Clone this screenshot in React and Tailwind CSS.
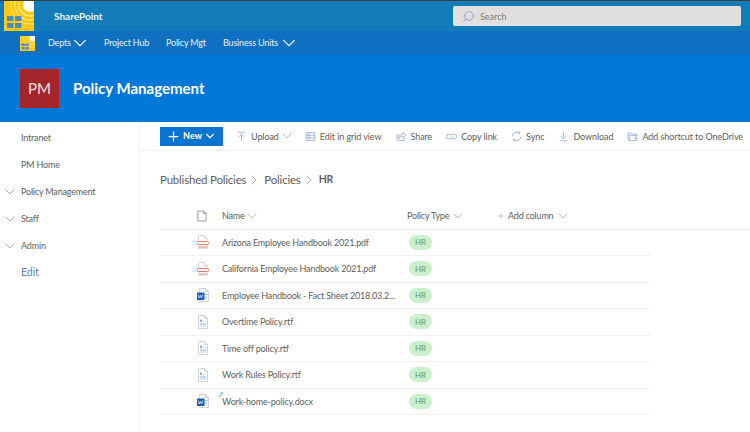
import { ChevronDown, ChevronRight, Plus, Search } from "lucide-react";

const font = { fontFamily: 'Lato, "Open Sans", sans-serif' };

const LogoIcon = ({ className }) => (
    <svg viewBox="0 0 30 30" className={className}>
        <rect width="30" height="30" fill="#fdc911" />
        <circle cx="26" cy="4" r="19" fill="none" stroke="#ffe27a" strokeWidth="1.2" />
        <circle cx="26" cy="4" r="15" fill="none" stroke="#ffe98a" strokeWidth="1.2" />
        <circle cx="26" cy="4" r="11" fill="none" stroke="#fff0b0" strokeWidth="1.2" />
        <circle cx="26" cy="4" r="7" fill="#ffffff" />
        <rect x="3" y="15" width="6.500" height="5" fill="#4f8db8" />
        <rect x="11" y="15" width="6.500" height="5" fill="#4f8db8" />
        <rect x="3" y="22" width="6.500" height="5" fill="#4f8db8" />
        <rect x="11" y="22" width="6.500" height="5" fill="#4f8db8" />
    </svg>
);

const PdfIcon = () => (
    <svg viewBox="0 0 14 14" className="w-[14px] h-[14px]">
        <path d="M2.500 13.500V.5h6l3 3v10z" fill="#fff" stroke="#d2d0ce" strokeWidth="0.8" />
        <path d="M8.500.5v3h3" fill="none" stroke="#d2d0ce" strokeWidth="0.8" />
        <rect x="1.500" y="6.500" width="11" height="3" rx="1" fill="#fff" stroke="#e0705f" strokeWidth="0.9" />
        <rect x="3" y="11" width="8" height="2" fill="#f2c0b8" />
    </svg>
);

const WordIcon = () => (
    <svg viewBox="0 0 14 14" className="w-[14px] h-[14px]">
        <path d="M3.500 13.500V.5h6l3 3v10z" fill="#fff" stroke="#c8c6c4" strokeWidth="0.8" />
        <path d="M9.500.5v3h3" fill="none" stroke="#c8c6c4" strokeWidth="0.8" />
        <rect x="9" y="6" width="2.500" height="1" fill="#8ab8e6" />
        <rect x="9" y="8.500" width="2.500" height="1" fill="#8ab8e6" />
        <rect x="1" y="4.500" width="7.500" height="7.500" fill="#1b5eb8" />
        <path d="M2.500 6.500l.8 3.500 1.200-2.500 1.200 2.500.8-3.500" fill="none" stroke="#fff" strokeWidth="0.7" />
    </svg>
);

const RtfIcon = () => (
    <svg viewBox="0 0 14 14" className="w-[14px] h-[14px]">
        <path d="M2.500 13.500V.5h6l3 3v10z" fill="#fff" stroke="#c8c6c4" strokeWidth="0.8" />
        <path d="M8.500.5v3h3" fill="none" stroke="#c8c6c4" strokeWidth="0.8" />
        <rect x="4" y="4.500" width="2" height="2.500" fill="#7fb2e0" />
        <rect x="4" y="8.500" width="6" height="1" fill="#7fb2e0" />
        <rect x="4" y="10.500" width="6" height="1" fill="#b5d3ee" />
        <rect x="7" y="5.500" width="3" height="1" fill="#b5d3ee" />
    </svg>
);

const ToolIcon = ({ children }) => (
    <svg
        viewBox="0 0 14 14"
        fill="none"
        stroke="#7f9fd0"
        strokeWidth="0.9"
        className="w-[11px] h-[11px] shrink-0"
    >
        {children}
    </svg>
);

const toolbar = [
    {
        label: "Upload",
        menu: true,
        icon: <path d="M2 1.500h10M7 13V4M3.500 7.500 7 4l3.500 3.500" />,
    },
    {
        label: "Edit in grid view",
        icon: <path d="M1.500 2h11v10h-11zM1.500 5.300h11M1.500 8.600h11M5 2v10" />,
    },
    {
        label: "Share",
        icon: <path d="M9 1.500 13 5 9 8.500V6.500C6 6.500 4.500 7.500 3.500 10 3.500 6.500 5.500 3.700 9 3.500zM10.500 9v3h-9V5H4" />,
    },
    {
        label: "Copy link",
        icon: <path d="M5 4H3.500a3 3 0 0 0 0 6H6a3 3 0 0 0 3-3M9 10h1.500a3 3 0 0 0 0-6H8a3 3 0 0 0-3 3" />,
    },
    {
        label: "Sync",
        icon: <path d="M1.500 7A5.500 5.500 0 0 1 11 3.200M12.500 7A5.500 5.500 0 0 1 3 10.800M11 1v2.400H8.600M3 13v-2.400h2.400" />,
    },
    {
        label: "Download",
        icon: <path d="M2 12.500h10M7 1v9M3.500 6.500 7 10l3.500-3.500" />,
    },
    {
        label: "Add shortcut to OneDrive",
        icon: <path d="M1.500 12V2.500h4l1.500 1.500h5.500V12zM1.500 5.500h11M4 10.500a1.300 1.300 0 0 1 0-2.600h1M9 7.900h1a1.300 1.300 0 0 1 0 2.600" />,
    },
];

const files = [
    { name: "Arizona Employee Handbook 2021.pdf", Icon: PdfIcon },
    { name: "California Employee Handbook 2021.pdf", Icon: PdfIcon },
    { name: "Employee Handbook - Fact Sheet 2018.03.2...", Icon: WordIcon },
    { name: "Overtime Policy.rtf", Icon: RtfIcon },
    { name: "Time off policy.rtf", Icon: RtfIcon },
    { name: "Work Rules Policy.rtf", Icon: RtfIcon },
    { name: "Work-home-policy.docx", Icon: WordIcon, isNew: true },
];

const sideItems = [
    { label: "Intranet" },
    { label: "PM Home" },
    { label: "Policy Management", caret: true },
    { label: "Staff", caret: true },
    { label: "Admin", caret: true },
];

const App = () => {
    return (
        <div style={font} className="w-[750px] h-[432px] overflow-hidden bg-white flex flex-col whitespace-nowrap">
            <div className="h-[1px] bg-[#3c3c3c] shrink-0" />
            <div className="h-[30px] shrink-0 bg-[#127cb8] flex items-center">
                <LogoIcon className="w-[30px] h-[30px] ml-[4px]" />
                <span className="ml-[20px] mt-[1px] text-[10px] font-bold text-[#eef6fb]">SharePoint</span>
                <div className="ml-auto mr-[9px] w-[288px] h-[20px] bg-[#e1dfdd] rounded-[2px] flex items-center pl-[9px]">
                    <Search className="w-[13px] h-[13px] text-[#8090c8] -scale-x-100" strokeWidth={1.4} />
                    <span className="ml-[5px] mt-[1px] text-[9px] text-[#807e7c]">Search</span>
                </div>
            </div>
            <div className="h-[24px] shrink-0 bg-[#0f6fc0] flex items-center text-[9px] tracking-[-0.18px] text-[#e8f1fb]">
                <LogoIcon className="w-[15px] h-[15px] ml-[20px]" />
                <span className="ml-[13px] w-[21px]">Depts</span>
                <ChevronDown className="w-[22px] h-[22px]" strokeWidth={1.2} />
                <span className="ml-[13px] w-[45px]">Project Hub</span>
                <span className="ml-[17px] w-[40px]">Policy Mgt</span>
                <span className="ml-[17px] w-[55px]">Business Units</span>
                <ChevronDown className="w-[22px] h-[22px]" strokeWidth={1.2} />
            </div>
            <div className="h-[67px] shrink-0 bg-[#0078d7] flex items-center pl-[20px]">
                <div className="w-[39px] h-[39px] bg-[#a4262c] border border-[#b8201f] flex items-center justify-center text-[15px] text-[#f3e3e3]">
                    PM
                </div>
                <span className="ml-[14px] mb-[1px] text-[15px] font-bold text-white">Policy Management</span>
            </div>
            <div className="flex-1 flex min-h-0">
                <div className="w-[140px] shrink-0 border-r border-[#f0f0f0] pt-[2px] text-[9px] tracking-[-0.18px] text-[#605e5c]">
                    {sideItems.map((item) => (
                        <div key={item.label} className="h-[27px] flex items-center">
                            <div className="w-[21px] shrink-0 flex justify-start pl-[2px]">
                                {item.caret && (
                                    <ChevronDown className="w-[16px] h-[16px] text-[#8a8886]" strokeWidth={1} />
                                )}
                            </div>
                            <span>{item.label}</span>
                        </div>
                    ))}
                    <div className="h-[27px] flex items-center pl-[21px] text-[10.500px] tracking-normal text-[#5c7fc4]">Edit</div>
                </div>
                <div className="flex-1 min-w-0">
                    <div className="h-[29px] border-b border-[#f0f0f0] flex items-center gap-[14px] pl-[20px] text-[9px] tracking-[-0.08px] text-[#605e5c]">
                        <div className="w-[63px] h-[19px] shrink-0 mr-[-1px] bg-[#0a74d0] flex items-center justify-center text-white font-bold text-[9px] tracking-normal">
                            <Plus className="w-[15px] h-[15px]" strokeWidth={2} />
                            <span className="ml-[2px]">New</span>
                            <ChevronDown className="w-[14px] h-[14px] ml-[1px]" strokeWidth={2} />
                        </div>
                        {toolbar.map((item) => (
                            <div key={item.label} className="flex items-center">
                                <ToolIcon>{item.icon}</ToolIcon>
                                <span className="ml-[4px] mt-[1px]">{item.label}</span>
                                {item.menu && (
                                    <ChevronDown className="w-[16px] h-[16px] mr-[-4px] text-[#a19f9d]" strokeWidth={1} />
                                )}
                            </div>
                        ))}
                    </div>
                    <div className="h-[58px] pl-[20px] flex items-center text-[11.500px] tracking-[-0.2px] text-[#605e5c]">
                        <span>Published Policies</span>
                        <ChevronRight className="w-[16px] h-[16px] mr-[2px] text-[#8a8886]" strokeWidth={1} />
                        <span>Policies</span>
                        <ChevronRight className="w-[16px] h-[16px] mr-[2px] text-[#8a8886]" strokeWidth={1} />
                        <span className="font-bold text-[10.500px]">HR</span>
                    </div>
                    <div className="h-[21px] ml-[20px] pb-[7px] border-b border-[#f3f2f1] flex items-center text-[9px] tracking-[-0.18px] text-[#605e5c]">
                        <div className="w-[62px] pl-[37px] shrink-0">
                            <svg viewBox="0 0 12 14" fill="none" stroke="#8a8886" className="w-[10px] h-[12px]">
                                <path d="M1 1h7l3 3v9H1zM8 1v3h3" />
                            </svg>
                        </div>
                        <span className="w-[22px]">Name</span>
                        <ChevronDown className="w-[16px] h-[16px] text-[#a19f9d]" strokeWidth={1} />
                        <div className="w-[147px] shrink-0" />
                        <span className="w-[43px]">Policy Type</span>
                        <ChevronDown className="w-[16px] h-[16px] text-[#a19f9d]" strokeWidth={1} />
                        <Plus className="w-[8px] h-[8px] ml-[31px] text-[#8a8886]" strokeWidth={1.5} />
                        <span className="ml-[3px] w-[47px]">Add column</span>
                        <ChevronDown className="w-[16px] h-[16px] text-[#a19f9d]" strokeWidth={1} />
                    </div>
                    <div className="ml-[20px] w-[491px] -mt-[0.5px]">
                        {files.map(({ name, Icon, isNew }) => (
                            <div key={name} className="h-[26.500px] border-b border-[#f3f2f1] flex items-center text-[9px] tracking-[-0.18px] text-[#605e5c]">
                                <div className="w-[50px] shrink-0 flex justify-end">
                                    <Icon />
                                </div>
                                <div className="w-[199px] shrink-0 pl-[12px] relative">
                                    {isNew && (
                                        <svg viewBox="0 0 5 5" fill="none" stroke="#2b88d8" strokeWidth="0.7" className="absolute left-[8px] top-[-3px] w-[5px] h-[5px]">
                                            <path d="M0.500 4.500C2.500 4.500 4 3 4.500 0.500M2 1.500 4.500 0.500" />
                                        </svg>
                                    )}
                                    {name}
                                </div>
                                <div className="w-[23px] h-[15px] rounded-full bg-[#caf0cc] text-[8px] tracking-normal text-[#6f9a4a] flex items-center justify-center">
                                    HR
                                </div>
                            </div>
                        ))}
                    </div>
                </div>
            </div>
        </div>
    );
};

export default App;
